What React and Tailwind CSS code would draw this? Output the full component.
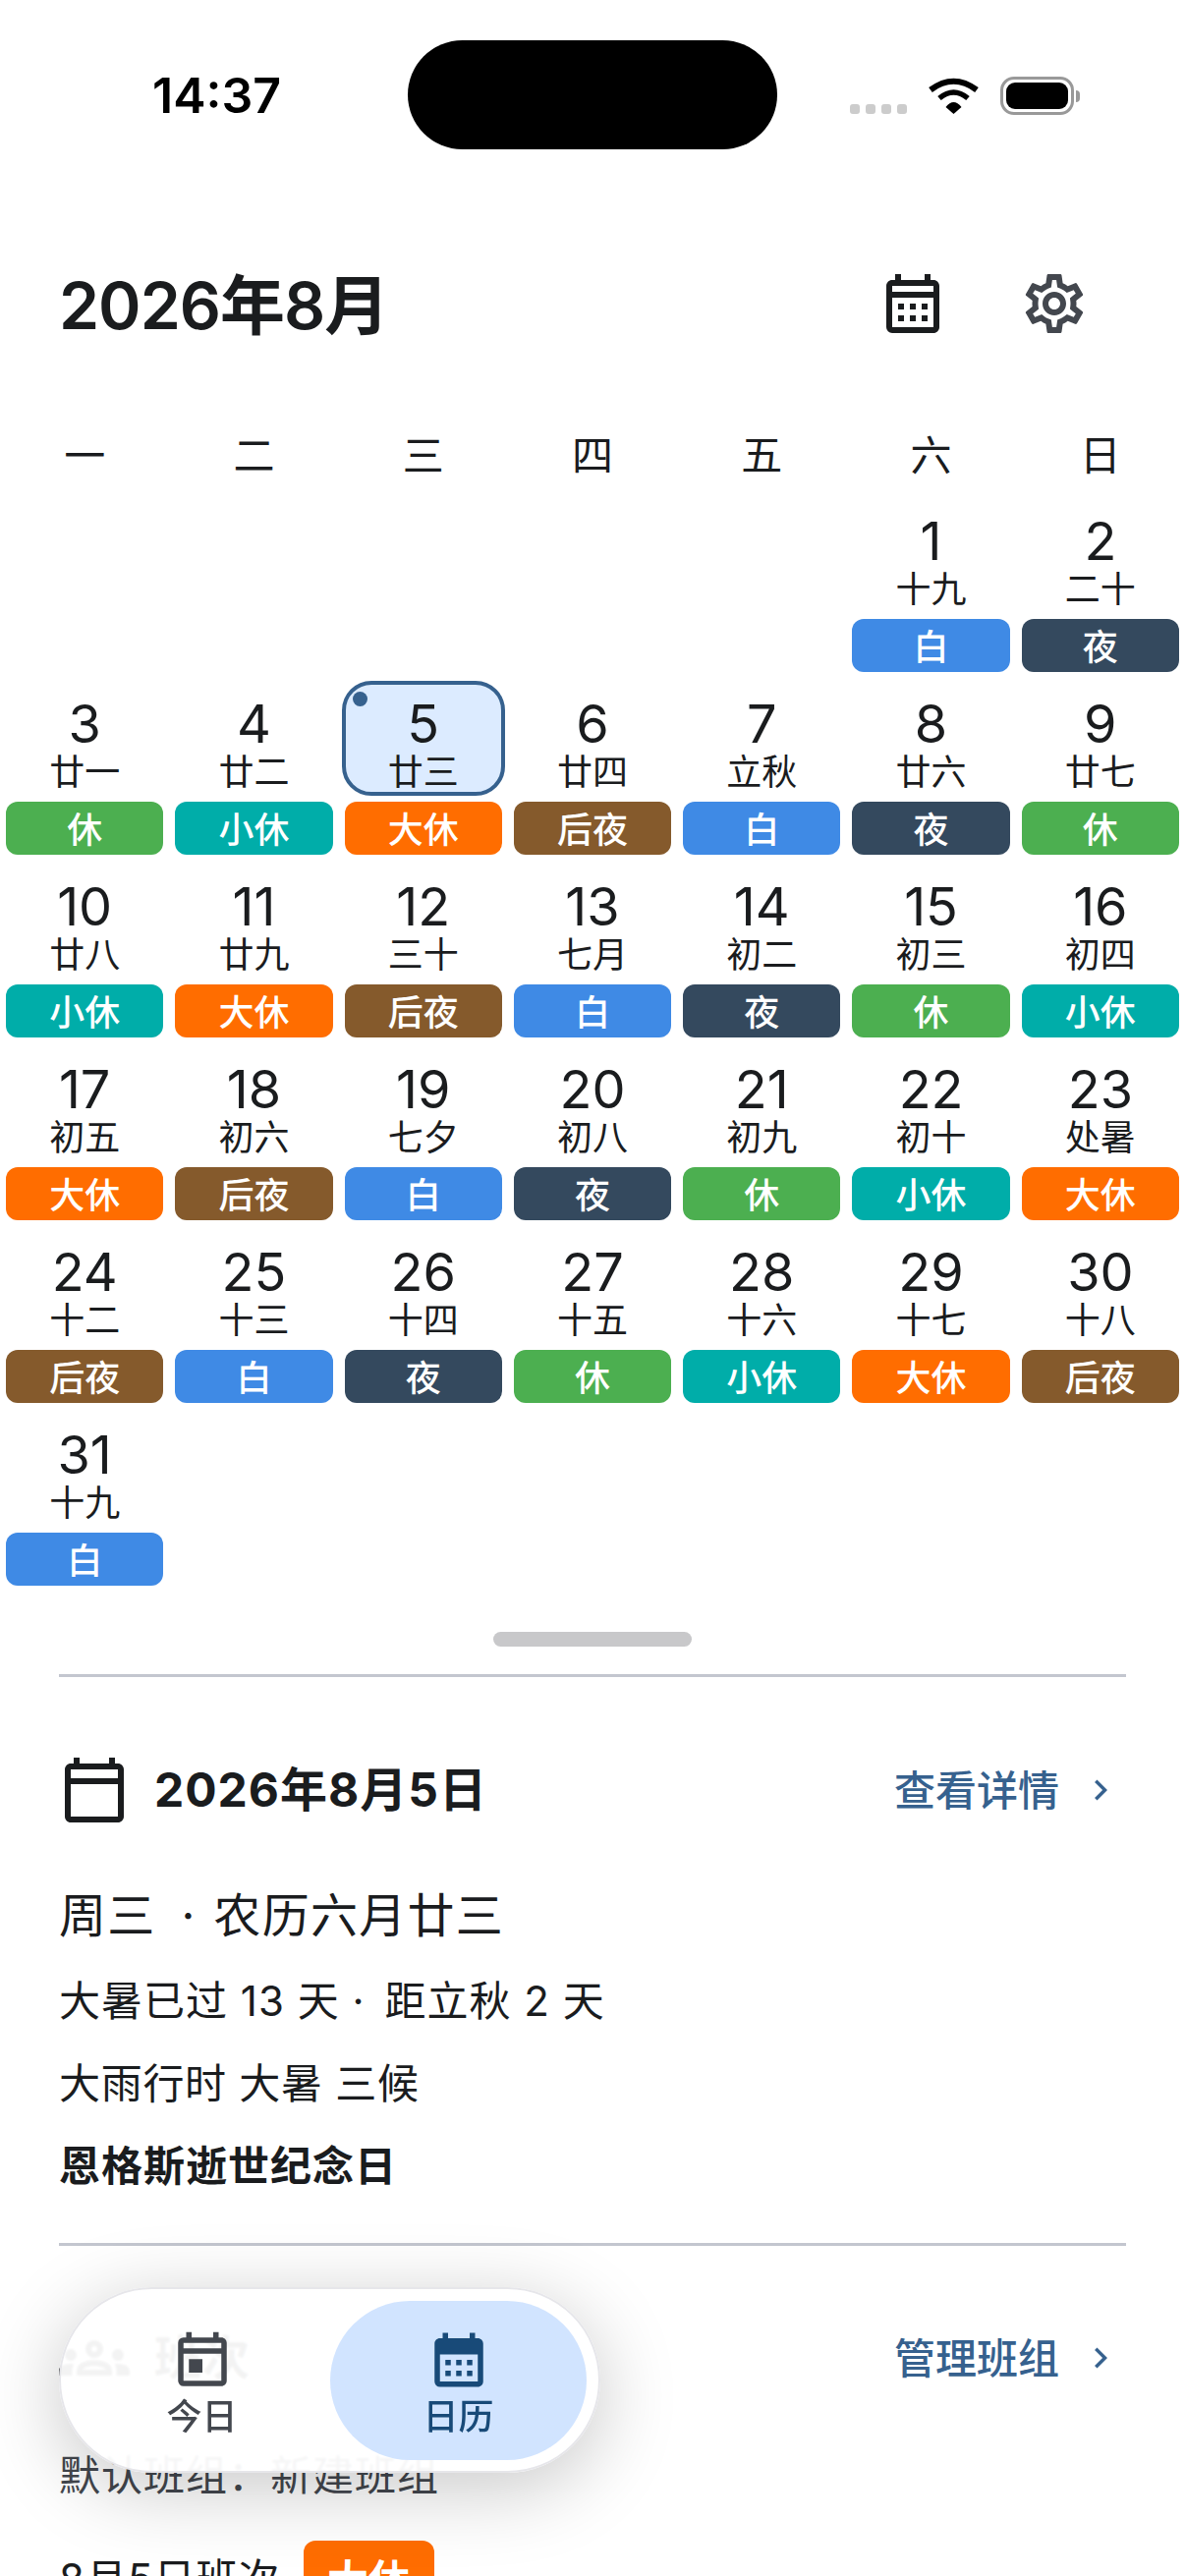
import React from 'react';
import {
  MdOutlineCalendarMonth, MdCalendarMonth, MdOutlineSettings, MdOutlineCalendarToday,
  MdOutlineToday, MdOutlineGroups, MdChevronRight,
} from 'react-icons/md';

const SHIFTS = {
  白: 'bg-[#3f8ae5]',
  夜: 'bg-[#34495e]',
  休: 'bg-[#4caf50]',
  小休: 'bg-[#00ada9]',
  大休: 'bg-[#ff6d00]',
  后夜: 'bg-[#855a2c]',
};

const WEEKDAYS = ['一', '二', '三', '四', '五', '六', '日'];

const DAYS = [
  [1, '十九', '白'], [2, '二十', '夜'],
  [3, '廿一', '休'], [4, '廿二', '小休'], [5, '廿三', '大休'], [6, '廿四', '后夜'], [7, '立秋', '白'], [8, '廿六', '夜'], [9, '廿七', '休'],
  [10, '廿八', '小休'], [11, '廿九', '大休'], [12, '三十', '后夜'], [13, '七月', '白'], [14, '初二', '夜'], [15, '初三', '休'], [16, '初四', '小休'],
  [17, '初五', '大休'], [18, '初六', '后夜'], [19, '七夕', '白'], [20, '初八', '夜'], [21, '初九', '休'], [22, '初十', '小休'], [23, '处暑', '大休'],
  [24, '十二', '后夜'], [25, '十三', '白'], [26, '十四', '夜'], [27, '十五', '休'], [28, '十六', '小休'], [29, '十七', '大休'], [30, '十八', '后夜'],
  [31, '十九', '白'],
];

function StatusIcons() {
  return (
    <div className="flex items-end w-[235px] h-[39px] mt-[37px] ml-[74px] gap-[22px]">
      <div className="flex gap-[6px] mb-px">
        {[0, 1, 2, 3].map(i => <div key={i} className="w-[10px] h-[10px] rounded-[3px] bg-[#cccccc]" />)}
      </div>
      <svg width="51" height="37" viewBox="0 0 51 37" className="mb-px">
        <path d="M2 12.5 Q25.5 -5 49 12.5" fill="none" stroke="#000" strokeWidth="6" />
        <path d="M11 21 Q25.5 9 40 21" fill="none" stroke="#000" strokeWidth="5.5" />
        <path d="M17.5 30 Q25.5 20 33.5 30 L25.5 37 Z" fill="#000" />
      </svg>
      <div className="flex items-center">
        <div className="w-[75px] h-[39px] rounded-[14px] border-[3px] border-[#999999] p-[3px]">
          <div className="w-full h-full rounded-[9px] bg-black" />
        </div>
        <div className="w-[4px] h-[12px] rounded-r-full bg-[#999999] ml-[2px]" />
      </div>
    </div>
  );
}

function DayCell({ day, lunar, shift }) {
  const today = day === 5;
  return (
    <div className="h-[186px] flex flex-col">
      <div className={`relative h-[117px] mx-[3px] rounded-[30px] border-[4px] flex flex-col items-center ${today ? 'border-[#36618e] bg-[#dcebff]' : 'border-transparent'}`}>
        {today && <div className="absolute left-[7px] top-[7px] w-[15px] h-[15px] rounded-full bg-[#36618e]" />}
        <div className="mt-[13px] text-[54px] leading-[54px] text-[#1a1c1e]">{day}</div>
        <div className="mt-[4px] text-[36px] leading-[36px] text-[#1a1c1e]">{lunar}</div>
      </div>
      <div className={`mt-[6px] mx-[6px] h-[54px] pt-[4px] rounded-[12px] flex items-center justify-center text-[36px] leading-[36px] font-medium text-white ${SHIFTS[shift]}`}>
        {shift}
      </div>
    </div>
  );
}

function SectionHeader({ icon: Icon, title, action }) {
  return (
    <div className="flex items-center h-[72px]">
      <Icon size={72} className="text-[#1a1c1e]" />
      <span className="ml-[25px] text-[48px] font-bold tracking-[1px] text-[#1a1c1e]">{title}</span>
      <span className="ml-auto text-[42px] font-medium text-[#36618e]">{action}</span>
      <MdChevronRight size={42} className="ml-[21px] mr-[5px] text-[#36618e]" />
    </div>
  );
}

function BottomNav() {
  return (
    <div className="absolute left-[60px] top-[2328px] w-[551px] h-[189px] rounded-full border-2 border-[#e6e6ea] bg-white/95 backdrop-blur-[1px] shadow-[0_16px_80px_rgba(0,0,0,0.22)] flex items-center pl-[10px]">
      <div className="w-[264px] h-[162px] pl-[3px] pt-[3px] flex flex-col items-center justify-center gap-[5px] text-[#43474e]">
        <MdOutlineToday size={66} />
        <span className="text-[36px] leading-[36px] font-medium">今日</span>
      </div>
      <div className="w-[261px] h-[162px] pt-[2px] rounded-full bg-[#d1e4ff] flex flex-col items-center justify-center gap-[7px] text-[#184a78]">
        <MdCalendarMonth size={66} />
        <span className="text-[36px] leading-[36px] font-medium">日历</span>
      </div>
    </div>
  );
}

export default function App() {
  return (
    <div className="relative w-[1206px] h-[2622px] overflow-hidden bg-white font-['Inter','Noto_Sans_CJK_SC',sans-serif] text-[#1a1c1e]">
      {/* Status bar */}
      <div className="flex pt-[41px] h-[152px]">
        <div className="w-[415px] pl-[155px] pt-[26px] text-[50px] leading-[60px] font-semibold text-black">14:37</div>
        <div className="w-[376px] h-[111px] rounded-full bg-black" />
        <StatusIcons />
      </div>

      {/* Month title */}
      <div className="flex items-center h-[72px] mt-[121px] pl-[60px] pr-[97px]">
        <h1 className="pt-[3px] text-[66px] leading-[72px] font-semibold tracking-[-1px] text-[#1a1c1e]">2026年8月</h1>
        <MdOutlineCalendarMonth size={72} className="ml-auto text-[#1a1c1e]" />
        <MdOutlineSettings size={72} className="ml-[72px] text-[#43474e]" />
      </div>

      {/* Weekdays */}
      <div className="grid grid-cols-7 mt-[87px] mb-[19px] h-[56px]">
        {WEEKDAYS.map(w => (
          <div key={w} className="flex items-center justify-center text-[42px] text-[#1a1c1e]">{w}</div>
        ))}
      </div>

      {/* Month grid */}
      <div className="grid grid-cols-7">
        {[0, 1, 2, 3, 4].map(i => <div key={i} />)}
        {DAYS.map(([day, lunar, shift]) => <DayCell key={day} day={day} lunar={lunar} shift={shift} />)}
      </div>

      <div className="w-[202px] h-[15px] mx-auto mt-[38px] rounded-full bg-[#c8c8ca]" />

      <div className="px-[60px] mt-[28px]">
        <div className="h-[3px] bg-[#c3c6cf]" />

        {/* Selected day */}
        <div className="mt-[79px]">
          <SectionHeader icon={MdOutlineCalendarToday} title="2026年8月5日" action="查看详情" />
        </div>
        <p className="mt-[62px] text-[48px] leading-[60px] tracking-[1.3px]">周三<span className="ml-[11px] mr-[3px]"> · </span>农历六月廿三</p>
        <p className="mt-[29px] text-[42px] leading-[56px] tracking-[1px]">大暑已过 13 天<span className="mr-[7px]"> · </span>距立秋 2 天</p>
        <p className="mt-[28px] text-[42px] leading-[56px] tracking-[0.7px]">大雨行时 大暑 三候</p>
        <p className="mt-[28px] text-[42px] leading-[56px] font-bold tracking-[1px]">恩格斯逝世纪念日</p>

        <div className="h-[3px] mt-[50px] bg-[#c3c6cf]" />

        {/* Shift summary */}
        <div className="mt-[78px]">
          <SectionHeader icon={MdOutlineGroups} title="班次" action="管理班组" />
        </div>
        <p className="mt-[56px] text-[42px] leading-[56px] tracking-[1px] text-[#43474e]">默认班组：新建班组</p>
        <div className="flex items-center mt-[38px] gap-[23px]">
          <span className="text-[42px] leading-[56px] tracking-[1px]">8月5日班次</span>
          <span className="w-[133px] h-[78px] rounded-[12px] bg-[#ff6d00] flex items-center justify-center text-[42px] font-bold text-white">大休</span>
        </div>
      </div>

      <BottomNav />
    </div>
  );
}
